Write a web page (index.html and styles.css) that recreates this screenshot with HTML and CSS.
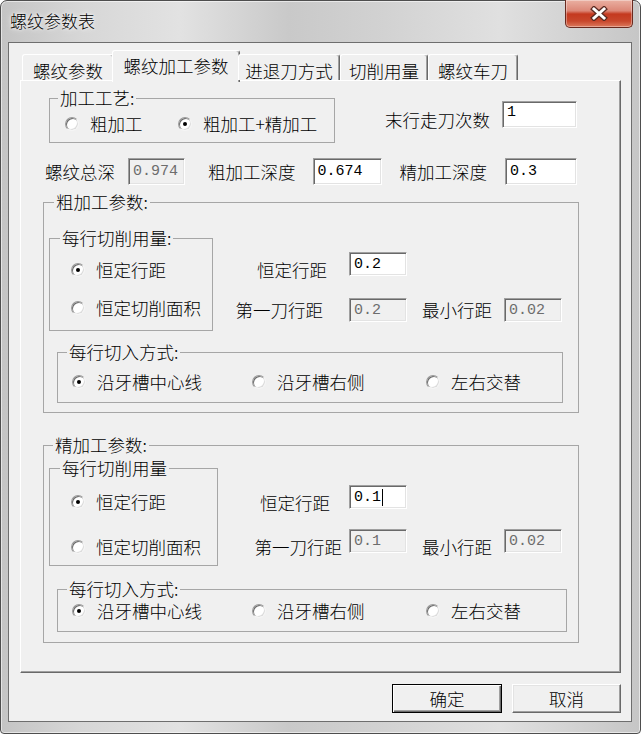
FILE: index.html
```
<!DOCTYPE html>
<html lang="zh">
<head>
<meta charset="utf-8">
<title>螺纹参数表</title>
<link rel="stylesheet" href="styles.css">
</head>
<body>
<div class="window">
  <div class="titlebar">
    <span class="title">螺纹参数表</span>
    <div class="close">
      <svg width="18" height="15" viewBox="0 0 18 15">
        <path d="M4 3 L14 12 M14 3 L4 12" stroke="#5b2b22" stroke-width="5.5" stroke-linecap="square" fill="none"/>
        <path d="M4 3 L14 12 M14 3 L4 12" stroke="#ffffff" stroke-width="3" stroke-linecap="square" fill="none"/>
      </svg>
    </div>
  </div>
  <div class="client">
    <div class="tabs">
      <div class="tab t1">螺纹参数</div>
      <div class="tab t2 active">螺纹加工参数</div>
      <div class="tab t3">进退刀方式</div>
      <div class="tab t4">切削用量</div>
      <div class="tab t5">螺纹车刀</div>
    </div>
    <div class="panel">
      <div class="row1">
        <fieldset class="group g-craft">
          <legend>加工工艺:</legend>
          <div class="craft-radios">
            <div class="radio-item craft-1"><span class="radio"></span>粗加工</div>
            <div class="radio-item"><span class="radio checked"></span>粗加工+精加工</div>
          </div>
        </fieldset>
        <span class="lbl lbl-last">末行走刀次数</span>
        <div class="input in-last">1</div>
      </div>
      <div class="row2">
        <span class="lbl ml-24">螺纹总深</span>
        <div class="input disabled w57 ml-13">0.974</div>
        <span class="lbl ml-23">粗加工深度</span>
        <div class="input w69 ml-17">0.674</div>
        <span class="lbl ml-18">精加工深度</span>
        <div class="input w72 ml-18">0.3</div>
      </div>

      <fieldset class="group g-param g-rough">
        <legend>粗加工参数:</legend>
        <div class="param-top">
          <fieldset class="group g-amount g-amount-rough">
            <legend>每行切削用量:</legend>
            <div class="radios-col rc-rough">
              <div class="radio-item"><span class="radio checked"></span>恒定行距</div>
              <div class="radio-item"><span class="radio"></span>恒定切削面积</div>
            </div>
          </fieldset>
          <div class="grid grid-rough">
            <span class="lab r1 mr-22">恒定行距</span>
            <div class="input in-s r1">0.2</div>
            <span class="empty"></span>
            <span class="empty"></span>
            <span class="lab r2c mr-26">第一刀行距</span>
            <div class="input in-s disabled">0.2</div>
            <span class="lab2 r2c">最小行距</span>
            <div class="input in-s disabled">0.02</div>
          </div>
        </div>
        <fieldset class="group g-mode g-mode-rough">
          <legend>每行切入方式:</legend>
          <div class="radios-row">
            <div class="radio-item m1"><span class="radio checked"></span>沿牙槽中心线</div>
            <div class="radio-item m2"><span class="radio"></span>沿牙槽右侧</div>
            <div class="radio-item"><span class="radio"></span>左右交替</div>
          </div>
        </fieldset>
      </fieldset>

      <fieldset class="group g-param g-fine">
        <legend>精加工参数:</legend>
        <div class="param-top">
          <fieldset class="group g-amount g-amount-fine">
            <legend>每行切削用量</legend>
            <div class="radios-col rc-fine">
              <div class="radio-item"><span class="radio checked"></span>恒定行距</div>
              <div class="radio-item"><span class="radio"></span>恒定切削面积</div>
            </div>
          </fieldset>
          <div class="grid grid-fine">
            <span class="lab r1 mr-19">恒定行距</span>
            <div class="input in-s r1">0.1<span class="caret"></span></div>
            <span class="empty"></span>
            <span class="empty"></span>
            <span class="lab r2e mr-7">第一刀行距</span>
            <div class="input in-s disabled r2s">0.1</div>
            <span class="lab2 r2e">最小行距</span>
            <div class="input in-s disabled r2s">0.02</div>
          </div>
        </div>
        <fieldset class="group g-mode g-mode-fine">
          <legend>每行切入方式:</legend>
          <div class="radios-row">
            <div class="radio-item m1"><span class="radio checked"></span>沿牙槽中心线</div>
            <div class="radio-item m2"><span class="radio"></span>沿牙槽右侧</div>
            <div class="radio-item"><span class="radio"></span>左右交替</div>
          </div>
        </fieldset>
      </fieldset>
    </div>
    <div class="buttons">
      <button class="btn default">确定</button>
      <button class="btn cancel">取消</button>
    </div>
  </div>
</div>
</body>
</html>
```

FILE: styles.css
```
* { box-sizing: border-box; }

body {
  margin: 0;
  background: #ffffff;
  font-family: "Noto Sans CJK SC", "Noto Sans", sans-serif;
  font-size: 17.5px;
  font-weight: 300;
  color: #000;
}

.window {
  width: 641px;
  height: 734px;
  border: 1px solid #4e4e4e;
  border-radius: 7px 7px 4px 4px;
  background: linear-gradient(90deg, #c4c4c4 0%, #d6d6d6 12%, #e2e2e2 28%, #c9c9c9 45%, #d2d2d2 60%, #e0e0e0 78%, #c6c6c6 100%);
  box-shadow: inset 0 0 0 1px rgba(255, 255, 255, 0.55);
  padding: 0 8px 11px 7px;
  display: flex;
  flex-direction: column;
}

.titlebar {
  height: 41px;
  display: flex;
  justify-content: space-between;
  align-items: flex-start;
  flex: none;
}

.title {
  margin: 9px 0 0 2px;
  line-height: 22px;
  font-size: 17px;
  text-shadow: 0 0 6px #ffffff, 0 0 3px #ffffff;
}

.close {
  width: 68px;
  height: 28px;
  margin: -1px -1px 0 0;
  border: 1px solid #6a2a1f;
  border-top: none;
  border-radius: 0 0 5px 5px;
  background: linear-gradient(180deg, #eab0a2 0%, #dc8777 40%, #c4391f 52%, #c8472c 78%, #dc7a5d 100%);
  box-shadow: inset 0 0 0 1px rgba(255, 255, 255, 0.35);
  display: flex;
  align-items: center;
  justify-content: center;
}

.client {
  flex: 1;
  background: #f0f0f0;
  border: 1px solid #6e6e6e;
  padding: 7px 10px 0 11px;
  display: flex;
  flex-direction: column;
}

/* tabs */
.tabs {
  display: flex;
  align-items: flex-end;
  height: 30px;
  padding-left: 2px;
  position: relative;
  z-index: 1;
  flex: none;
}

.tab {
  height: 26px;
  padding-top: 6px;
  line-height: 20px;
  display: flex;
  align-items: center;
  justify-content: center;
  border-top: 1px solid #ffffff;
  border-left: 1px solid #ffffff;
  border-right: 1px solid #696969;
  box-shadow: inset -1px 0 0 #a0a0a0;
  border-radius: 3px 3px 0 0;
  background: #f0f0f0;
}

.tab.active {
  height: 32px;
  margin: 0 -2px -2px;
  padding-top: 0;
  padding-bottom: 2px;
}

.t1 { width: 92px; }
.t2 { width: 128px; }
.t3 { width: 102px; }
.t4 { width: 88px; }
.t5 { width: 90px; }

.panel {
  height: 593px;
  flex: none;
  border: 1px solid;
  border-color: #ffffff #696969 #696969 #ffffff;
  box-shadow: inset -1px -1px 0 #a0a0a0;
}

/* common pieces */
fieldset.group {
  margin: 0;
  padding: 0;
  border: 1px solid #a6a6a6;
  min-width: 0;
}

legend {
  padding: 0 2px;
  line-height: 20px;
}

.lbl, .lab, .lab2 {
  line-height: 20px;
  white-space: nowrap;
}

.radio-item {
  display: flex;
  align-items: center;
  gap: 11px;
  height: 20px;
  line-height: 20px;
  white-space: nowrap;
}

.radio {
  width: 14px;
  height: 14px;
  flex: none;
  border-radius: 50%;
  background: #ffffff;
  border: 1px solid;
  border-color: #9a9a9a #f4f4f4 #f4f4f4 #9a9a9a;
  box-shadow: inset 1px 1px 0 #6a6a6a, inset -1px -1px 0 #dcdcdc;
  display: flex;
  align-items: center;
  justify-content: center;
}

.radio.checked::after {
  content: "";
  width: 4px;
  height: 4px;
  border-radius: 50%;
  background: #000;
}

.input {
  height: 24px;
  background: #ffffff;
  border: 1px solid;
  border-color: #a0a0a0 #ffffff #ffffff #a0a0a0;
  box-shadow: inset 1px 1px 0 #696969, inset -1px -1px 0 #e3e3e3;
  font-family: "Liberation Mono", monospace;
  font-weight: 400;
  font-size: 15px;
  padding-left: 4px;
  display: flex;
  align-items: center;
  flex: none;
}

.input.disabled {
  background: #f0f0f0;
  color: #6d6d6d;
}

.caret {
  display: inline-block;
  width: 1px;
  height: 17px;
  background: #000;
  margin-left: 1px;
}

/* row 1 */
.row1 {
  display: flex;
  align-items: flex-start;
}

.g-craft {
  margin: 7px 0 0 28px !important;
  width: 286px;
}

.g-craft legend { margin-left: 8px; }

.craft-radios {
  display: flex;
  padding: 6px 0 8px 15px;
}

.craft-1 { width: 113px; }

.lbl-last { margin: 29px 0 0 50px; }

.in-last {
  margin: 20px 0 0 12px;
  width: 75px;
  height: 27px;
  align-items: flex-start;
  padding-top: 2px;
}

/* row 2 */
.row2 {
  display: flex;
  align-items: center;
  margin-top: 15px;
}

.row2 .input { height: 27px; }

.ml-24 { margin-left: 24px; }
.ml-13 { margin-left: 13px; }
.ml-23 { margin-left: 23px; }
.ml-17 { margin-left: 17px; }
.ml-18 { margin-left: 18px; }
.w57 { width: 57px; }
.w69 { width: 69px; }
.w72 { width: 72px; }

/* parameter groups */
.g-param {
  margin-left: 22px !important;
  width: 536px;
}

.g-rough {
  margin-top: 7px !important;
  padding-bottom: 9px !important;
}

.g-rough > legend { margin-left: 10px; }

.g-fine {
  margin-top: 22px !important;
  padding-bottom: 10px !important;
}

.g-fine > legend { margin-left: 9px; }

.param-top {
  display: flex;
  align-items: flex-start;
}

.g-amount { margin-left: 5px !important; }
.g-amount legend { margin-left: 10px; }

.g-amount-rough { margin-top: 16px !important; width: 164px; }
.g-amount-fine { margin-top: 3px !important; width: 169px; }

.radios-col {
  display: flex;
  flex-direction: column;
  padding-left: 21px;
}

.rc-rough { padding-top: 12px; padding-bottom: 12px; gap: 18px; }
.rc-fine { padding-top: 14px; padding-bottom: 8px; gap: 25px; }

.grid {
  display: grid;
  align-items: start;
}

.grid-rough {
  grid-template-columns: 136px 58px 97px 58px;
  grid-template-rows: 28px 24px;
  row-gap: 18px;
  margin-top: 40px;
}

.grid-fine {
  grid-template-columns: 131px 58px 97px 58px;
  grid-template-rows: 28px 28px;
  row-gap: 16px;
  margin-top: 30px;
}

.lab { justify-self: end; }
.lab2 { justify-self: start; margin-left: 15px; }

.r1.lab { align-self: end; }
.r2c { align-self: center; }
.r2e { align-self: end; }
.r2s { align-self: start; }

.mr-22 { margin-right: 22px; }
.mr-26 { margin-right: 26px; }
.mr-19 { margin-right: 19px; }
.mr-7 { margin-right: 7px; }

.g-mode { margin-left: 13px !important; }
.g-mode legend { margin-left: 9px; }

.g-mode-rough { margin-top: 11px !important; width: 506px; }
.g-mode-fine { margin-top: 13px !important; width: 510px; }

.radios-row {
  display: flex;
  padding-left: 14px;
}

.g-mode-rough .radios-row { padding-top: 10px; padding-bottom: 10px; }
.g-mode-fine .radios-row { padding-top: 2px; padding-bottom: 10px; }

.m1 { width: 180px; }
.m2 { width: 174px; }

/* buttons */
.buttons {
  display: flex;
  justify-content: flex-end;
  gap: 10px;
  margin-top: 11px;
}

.btn {
  width: 110px;
  height: 29px;
  padding: 0;
  font: inherit;
  line-height: 20px;
  color: #000;
  background: #f0f0f0;
  border: 1px solid;
  border-color: #ffffff #696969 #696969 #ffffff;
  box-shadow: inset -1px -1px 0 #a0a0a0, inset 1px 1px 0 #e3e3e3;
}

.btn.default {
  border-color: #000000;
  box-shadow: inset 1px 1px 0 #ffffff, inset -1px -1px 0 #696969, inset -2px -2px 0 #a0a0a0;
}

.btn.cancel { width: 109px; }
```
